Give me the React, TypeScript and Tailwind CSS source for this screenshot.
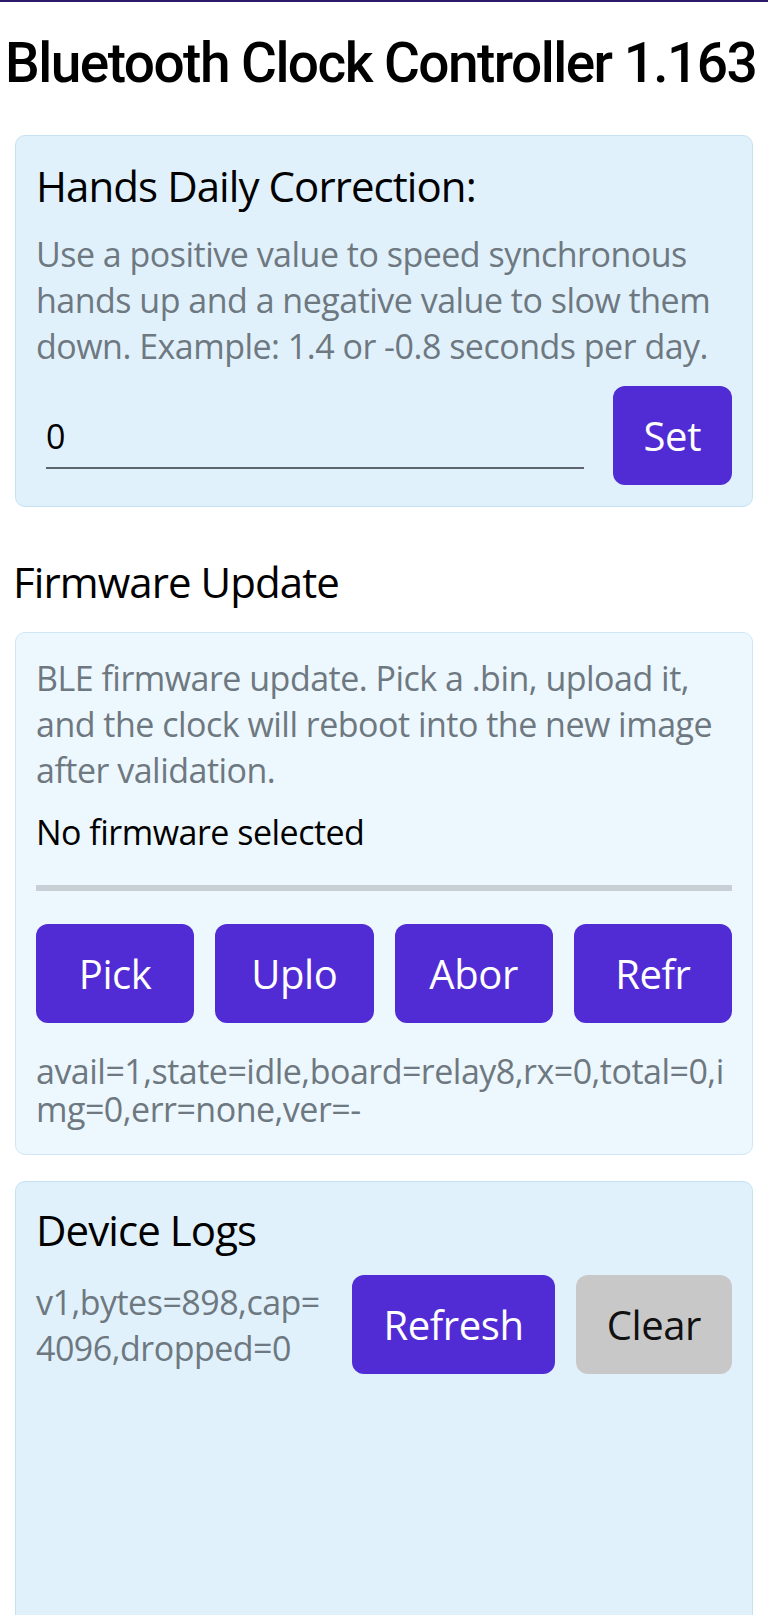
// Bluetooth clock controller screen
const gray = "text-[#6e7880]";
const body = "text-[34px] tracking-[-0.015em]";
const heading = "text-[42px] font-medium leading-[48px] tracking-[-0.022em]";

function PrimaryButton({ label, className = "" }: { label: string; className?: string }) {
  return (
    <button
      className={`flex items-center justify-center rounded-[12px] bg-[#512bd4] text-[40px] leading-none tracking-[-0.01em] text-white ${className}`}
    >
      {label}
    </button>
  );
}

export default function App() {
  // firmware buttons are shown with their labels cut short, as on the device
  const fwButtons = ["Pick", "Uplo", "Abor", "Refr"];

  return (
    <div className="min-h-screen bg-white font-['Open_Sans',sans-serif] text-black">
      <div className="h-[2px] bg-[#2e1a6a]" />

      <h1 className="mt-[30px] whitespace-nowrap pl-[5px] font-['Roboto',sans-serif] text-[55px] font-medium leading-[62px] tracking-[-0.028em]">
        Bluetooth Clock Controller 1.163
      </h1>

      {/* Hands correction */}
      <section className="mx-[15px] mt-[41px] rounded-[10px] border border-[#c5e2f2] bg-[#e1f1fc] px-[20px] pt-[26px] pb-[21px]">
        <h2 className={heading}>Hands Daily Correction:</h2>
        <p className={`mt-[21px] leading-[46px] ${body} ${gray}`}>
          Use a positive value to speed synchronous hands up and a negative value to slow them
          down. Example: 1.4 or -0.8 seconds per day.
        </p>
        <div className="mt-[17px] flex items-start gap-[29px]">
          <input
            defaultValue="0"
            className="ml-[10px] h-[83px] min-w-0 flex-1 border-b-2 border-[#5c666c] bg-transparent pt-[18px] text-[34px] text-black outline-none"
          />
          <PrimaryButton label="Set" className="h-[99px] px-[31px]" />
        </div>
      </section>

      <h2 className={`mt-[51px] pl-[13px] ${heading}`}>Firmware Update</h2>

      <section className="mx-[15px] mt-[26px] rounded-[10px] border border-[#cfe7f4] bg-[#edf7fe] px-[20px] pt-[22px] pb-[26px]">
        <p className={`leading-[46px] ${body} ${gray}`}>
          BLE firmware update. Pick a .bin, upload it, and the clock will reboot into the new image
          after validation.
        </p>
        <p className={`mt-[16px] leading-[46px] ${body}`}>No firmware selected</p>
        <div className="mt-[30px] h-[6px] bg-[#c8d0d5]" />
        <div className="mt-[33px] grid grid-cols-4 gap-[21px]">
          {fwButtons.map((b) => (
            <PrimaryButton key={b} label={b} className="h-[99px]" />
          ))}
        </div>
        <p className={`mt-[29px] break-all leading-[38px] ${body} ${gray}`}>
          avail=1,state=idle,board=relay8,rx=0,total=0,img=0,err=none,ver=-
        </p>
      </section>

      {/* Logs */}
      <section className="mx-[15px] mt-[26px] h-[470px] rounded-[10px] border border-[#c5e2f2] bg-[#e1f1fc] px-[20px] pt-[24px]">
        <h2 className={heading}>Device Logs</h2>
        <div className="mt-[21px] flex items-start gap-[21px]">
          <p className={`min-w-0 flex-1 break-all pt-[4px] leading-[46px] ${body} ${gray}`}>
            v1,bytes=898,cap=4096,dropped=0
          </p>
          <PrimaryButton label="Refresh" className="h-[99px] px-[31px]" />
          <button className="flex h-[99px] items-center justify-center rounded-[12px] bg-[#c8c8c8] px-[31px] text-[40px] leading-none tracking-[-0.01em] text-[#111]">
            Clear
          </button>
        </div>
      </section>
    </div>
  );
}
